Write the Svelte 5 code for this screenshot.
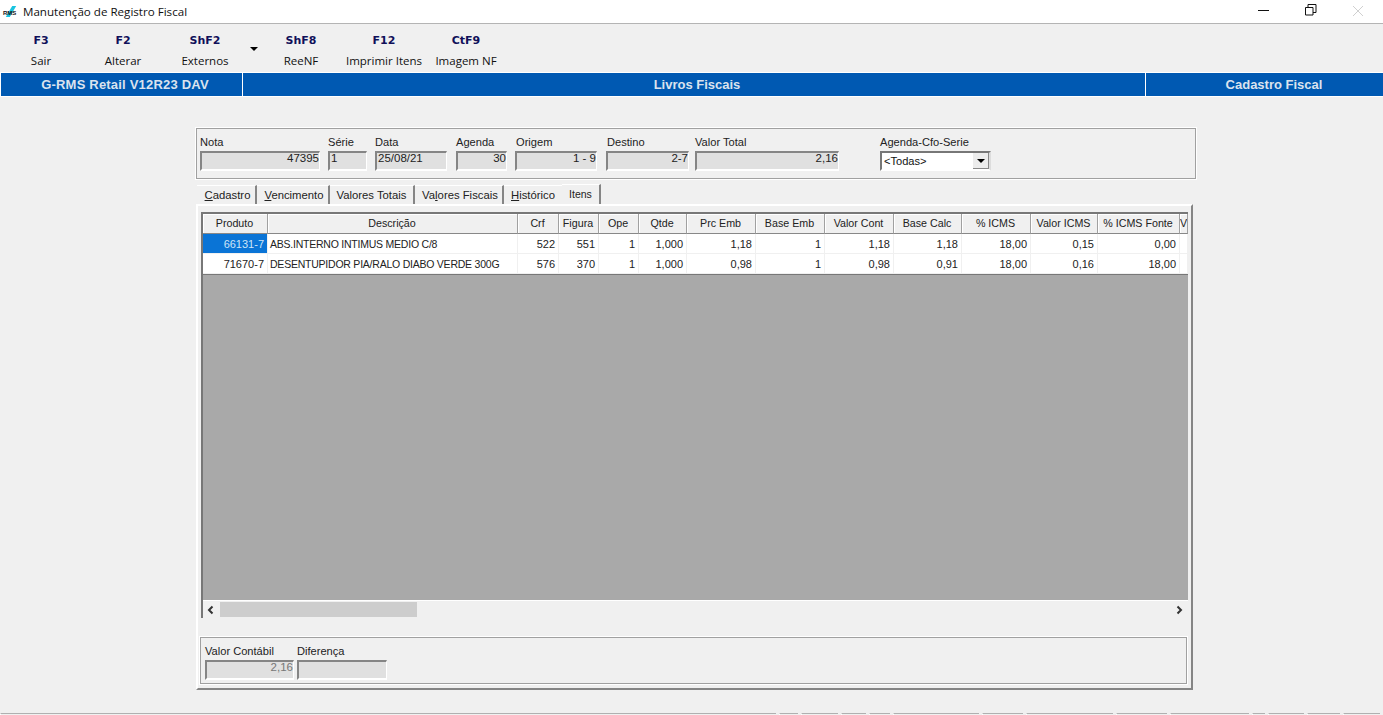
<script>
  const tools = [
    { key: 'F3', label: 'Sair', w: 82 },
    { key: 'F2', label: 'Alterar', w: 82 },
    { key: 'ShF2', label: 'Externos', w: 82 },
    { arrow: true, w: 14 },
    { key: 'ShF8', label: 'ReeNF', w: 82 },
    { key: 'F12', label: 'Imprimir Itens', w: 84 },
    { key: 'CtF9', label: 'Imagem NF', w: 80 }
  ];
  const fields = [
    { label: 'Nota', value: '47395', w: 120, gap: 8, right: true, lp: 0 },
    { label: 'Série', value: '1', w: 39, gap: 8, lp: 0 },
    { label: 'Data', value: '25/08/21', w: 72, gap: 9, lp: 0 },
    { label: 'Agenda', value: '30', w: 51, gap: 8, right: true, lp: 0 },
    { label: 'Origem', value: '1 - 9', w: 82, gap: 9, right: true, lp: 1 },
    { label: 'Destino', value: '2-7', w: 83, gap: 6, right: true, lp: 1 },
    { label: 'Valor Total', value: '2,16', w: 144, gap: 41, right: true, lp: 0 }
  ];
  const headers = ['Produto','Descrição','Crf','Figura','Ope','Qtde','Prc Emb','Base Emb','Valor Cont','Base Calc','% ICMS','Valor ICMS','% ICMS Fonte','V'];
  const rows = [
    ['66131-7','ABS.INTERNO INTIMUS MEDIO C/8','522','551','1','1,000','1,18','1','1,18','1,18','18,00','0,15','0,00',''],
    ['71670-7','DESENTUPIDOR PIA/RALO DIABO VERDE 300G','576','370','1','1,000','0,98','1','0,98','0,91','18,00','0,16','18,00','']
  ];
  const status = [779,22,40,28,24,89,44,90,54,82,16,39,36,40];
</script>

<div class="win">
  <header class="title">
    <span class="logo"><i></i><b>RMS</b></span>
    <span class="title-text">Manutenção de Registro Fiscal</span>
    <div class="controls">
      <svg width="12" height="12" viewBox="0 0 12 12" class="min"><path d="M0 6.500h11" stroke="#111" fill="none"/></svg>
      <svg width="12" height="12" viewBox="0 0 12 12" class="max"><path d="M.5 3.500h7.500v7.500h-7.500zM3 3V.5h8v8H8" stroke="#111" fill="none"/></svg>
      <svg width="12" height="12" viewBox="0 0 12 12" class="close"><path d="M1 1l10 10M11 1L1 11" stroke="#d0d0d0" fill="none"/></svg>
    </div>
  </header>

  <nav class="toolbar">
    {#each tools as t}
      {#if t.arrow}
        <span class="tool-arrow" style="width:{t.w}px"><i></i></span>
      {:else}
        <div class="tool" style="width:{t.w}px">
          <span class="key">{t.key}</span>
          <span class="tool-label">{t.label}</span>
        </div>
      {/if}
    {/each}
  </nav>

  <div class="banner">
    <div class="b1">G-RMS Retail V12R23 DAV</div>
    <div class="b2">Livros Fiscais</div>
    <div class="b3">Cadastro Fiscal</div>
  </div>

  <main class="content">
    <section class="group top">
      {#each fields as f}
        <div class="field" style="margin-right:{f.gap}px">
          <span class="lbl" style="padding-left:{f.lp}px">{f.label}</span>
          <span class="input" class:right={f.right} style="width:{f.w}px">{f.value}</span>
        </div>
      {/each}
      <div class="field">
        <span class="lbl">Agenda-Cfo-Serie</span>
        <div class="combo">
          <span>&lt;Todas&gt;</span>
          <span class="combo-btn"><i></i></span>
        </div>
      </div>
    </section>

    <div class="tabs">
      <span class="tab t1"><u>C</u>adastro</span>
      <span class="tab t2"><u>V</u>encimento</span>
      <span class="tab t3">Valores Totais</span>
      <span class="tab t4">Va<u>l</u>ores Fiscais</span>
      <span class="tab t5"><u>H</u>istórico</span>
      <span class="tab active">Itens</span>
    </div>

    <section class="page">
      <div class="grid-box">
        <div class="grid">
          {#each headers as h}
            <div class="hd">{h}</div>
          {/each}
          {#each rows as r, ri}
            {#each r as c, ci}
              <div class="cell" class:left={ci === 1} class:sel={ri === 0 && ci === 0}>{c}</div>
            {/each}
          {/each}
        </div>
        <div class="empty"></div>
        <div class="scroll">
          <svg width="16" height="16" viewBox="0 0 16 16" class="arr"><path d="M9.500 4.500L6 8l3.500 3.500" stroke="#333" stroke-width="2" fill="none"/></svg>
          <span class="thumb"></span>
          <svg width="16" height="16" viewBox="0 0 16 16" class="arr end"><path d="M6.500 4.500L10 8l-3.500 3.500" stroke="#333" stroke-width="2" fill="none"/></svg>
        </div>
      </div>

      <div class="group bottom">
        <div class="field gap1">
          <span class="lbl">Valor Contábil</span>
          <span class="input right dim w88">2,16</span>
        </div>
        <div class="field">
          <span class="lbl">Diferença</span>
          <span class="input w89"></span>
        </div>
      </div>
    </section>
  </main>

  <footer class="status">
    {#each status as w}
      <span style="width:{w}px"><i></i></span>
    {/each}
  </footer>
</div>

<style>
  :global(body) { margin: 0; background: #f0f0f0; }
  .win {
    width: 1383px; height: 715px; overflow: hidden;
    display: flex; flex-direction: column;
    background: #f0f0f0; color: #111;
    font-family: "Liberation Sans", Arial, sans-serif; font-size: 11.100px;
    box-sizing: border-box;
  }
  .title {
    height: 23px; flex: none; background: #fff; border-bottom: 1px solid #b4b4b4;
    display: flex; align-items: center; box-sizing: content-box;
    position: relative;
  }
  .logo { width: 23px; height: 16px; position: relative; flex: none; }
  .logo i {
    position: absolute; left: 9px; top: 2px; width: 4px; height: 11px;
    background: #19c4e0; transform: skewX(-30deg);
  }
  .logo b {
    position: absolute; left: 3px; top: 6px; font-size: 6px; line-height: 6px;
    font-family: "Liberation Sans", sans-serif; font-weight: 700; color: #111;
  }
  .title-text { font-family: "Open Sans", sans-serif; font-size: 11.600px; color: #111; }
  .controls { margin-left: auto; display: flex; align-items: flex-start; height: 23px; }
  .min { margin-top: 4px; margin-right: 35px; }
  .max { margin-top: 4px; margin-right: 35px; }
  .close { margin-top: 5px; margin-right: 19px; }

  .toolbar { height: 48px; flex: none; display: flex; box-sizing: border-box; }
  .tool { display: flex; flex-direction: column; align-items: center; padding-top: 10px; }
  .key {
    font-family: "DejaVu Sans", sans-serif; font-weight: 700; font-size: 11px;
    line-height: 14px; color: #10105a;
  }
  .tool-label {
    font-family: "Open Sans", sans-serif; font-size: 11.500px; line-height: 16px;
    margin-top: 5px; color: #111;
  }
  .tool-arrow { display: flex; justify-content: center; padding-top: 23px; box-sizing: border-box; }
  .tool-arrow i {
    width: 0; height: 0; border: 4px solid transparent; border-top: 4px solid #000; border-bottom: 0;
    margin-left: 1px;
  }

  .banner {
    height: 25px; flex: none; display: flex; box-sizing: border-box;
    background: #0059b2; border-top: 1px solid #fff; border-bottom: 1px solid #fff;
    color: #dbe3ee; font-weight: 700; font-size: 13px; line-height: 23px; text-align: center;
  }
  .b1 { width: 243px; border-left: 1px solid #fff; border-right: 1px solid #fff; box-sizing: border-box; padding-left: 7px; letter-spacing: 0.200px; }
  .b2 { width: 902px; box-sizing: border-box; padding-left: 6px; }
  .b3 { flex: 1; border-left: 1px solid #fff; padding-left: 19px; }

  .content { display: flex; flex-direction: column; padding: 31px 0 0 196px; }

  .group {
    border: 1px solid #a0a0a0; outline: 1px solid #fff; outline-offset: 0;
    box-sizing: border-box;
  }
  .top {
    width: 1000px; height: 51px; display: flex; padding: 6px 0 0 3px;
  }
  .field { display: flex; flex-direction: column; }
  .lbl { line-height: 14px; height: 15px; color: #222; white-space: nowrap; }
  .input {
    height: 20px; box-sizing: border-box; background: #e0e0e0; display: block;
    border: 2px solid; border-color: #858585 #fff #fff #858585; border-right-width: 1px;
    line-height: 10px; padding: 0 0 0 1px; white-space: nowrap; color: #222;
    margin-top: 1px; font-size: 11.500px;
  }
  .input.right { text-align: right; }
  .input.dim { color: #777; }
  .w88 { width: 89px; }
  .w89 { width: 90px; }
  .gap1 { margin-right: 3px; }

  .combo {
    width: 111px; height: 20px; margin-top: 1px; box-sizing: border-box; background: #fff;
    border: 2px solid; border-color: #777 #ddd #fff #777;
    display: flex; align-items: center; justify-content: space-between; padding-left: 2px;
  }
  .combo-btn {
    width: 16px; height: 16px; background: #ececec; border-left: 1px solid #fff;
    display: flex; align-items: center; justify-content: center; box-shadow: inset -1px -1px 0 #888;
  }
  .combo-btn i { width: 0; height: 0; border: 4px solid transparent; border-top: 4px solid #000; border-bottom: 0; }

  .tabs { display: flex; height: 20px; margin-top: 5px; align-items: flex-end; padding-left: 1px; font-size: 11.300px; }
  .tab {
    height: 19px; box-sizing: border-box; text-align: center; white-space: nowrap;
    border-right: 2px solid #858585; line-height: 19px; color: #222; border-top: 1px solid #fff;
  }
  .t1 { width: 60px; padding-left: 3px; }
  .t2 { width: 73px; padding-left: 3px; }
  .t3 { width: 85px; }
  .t4 { width: 89px; padding-left: 3px; }
  .t5 { width: 58px; border-right: 0; }
  .tab.active { height: 20px; line-height: 18px; font-size: 10.500px; width: 39px; }

  .page {
    width: 997px; height: 486px; box-sizing: border-box;
    border: 2px solid; border-color: #fff #858585 #858585 #fff;
    padding: 6px 3px 0 3px; display: flex; flex-direction: column;
  }
  .grid-box {
    width: 987px; height: 406px; flex: none; box-sizing: border-box;
    border-top: 2px solid #777; border-left: 2px solid #777;
    display: flex; flex-direction: column; background: #a9a9a9;
  }
  .grid {
    display: grid; flex: none;
    grid-template-columns: 65px 250px 41px 40px 40px 48px 69px 69px 69px 68px 69px 67px 82px 8px;
    grid-auto-rows: 20px; background: #fff; border-bottom: 1px solid #777;
  }
  .hd {
    background: #f0f0f0; text-align: center; line-height: 19px; height: 20px; overflow: hidden;
    font-size: 10.700px; box-sizing: border-box; color: #222; white-space: nowrap; padding-right: 1px;
    border-right: 1px solid #a0a0a0; border-bottom: 1px solid #888; box-shadow: inset 1px 1px 0 #fff;
  }
  .cell {
    height: 20px; line-height: 20px; text-align: right; padding: 0 3px 0 2px; box-sizing: border-box;
    background: #fff; white-space: nowrap; overflow: hidden; color: #222;
    border-right: 1px solid #f0f0f0; border-bottom: 1px solid #f0f0f0; font-size: 11px;
  }
  .cell.left { text-align: left; font-size: 10.500px; letter-spacing: -0.230px; }
  .cell.sel { background: #0a74d6; color: #cfe4f7; }
  .empty { flex: 1; background: #a9a9a9; }
  .scroll {
    height: 17px; flex: none; background: #f0f0f0; display: flex; align-items: center;
    border-top: 1px solid #fff;
  }
  .arr { flex: none; }
  .arr.end { margin-left: auto; margin-right: 1px; }
  .thumb { width: 197px; height: 15px; background: #cdcdcd; margin-left: 1px; flex: none; }

  .bottom {
    width: 987px; height: 47px; margin: 19px 0 0 -1px; padding: 6px 0 0 4px; display: flex;
    flex: none; border-color: #a0a0a0;
  }

  .status { margin-top: auto; height: 2px; flex: none; display: flex; }
  .status span { height: 2px; flex: none; }
  .status i { display: block; height: 2px; margin-right: 3px; box-sizing: border-box; border-top: 1px solid #b0b0b0; border-left: 1px solid #fff; }
</style>
